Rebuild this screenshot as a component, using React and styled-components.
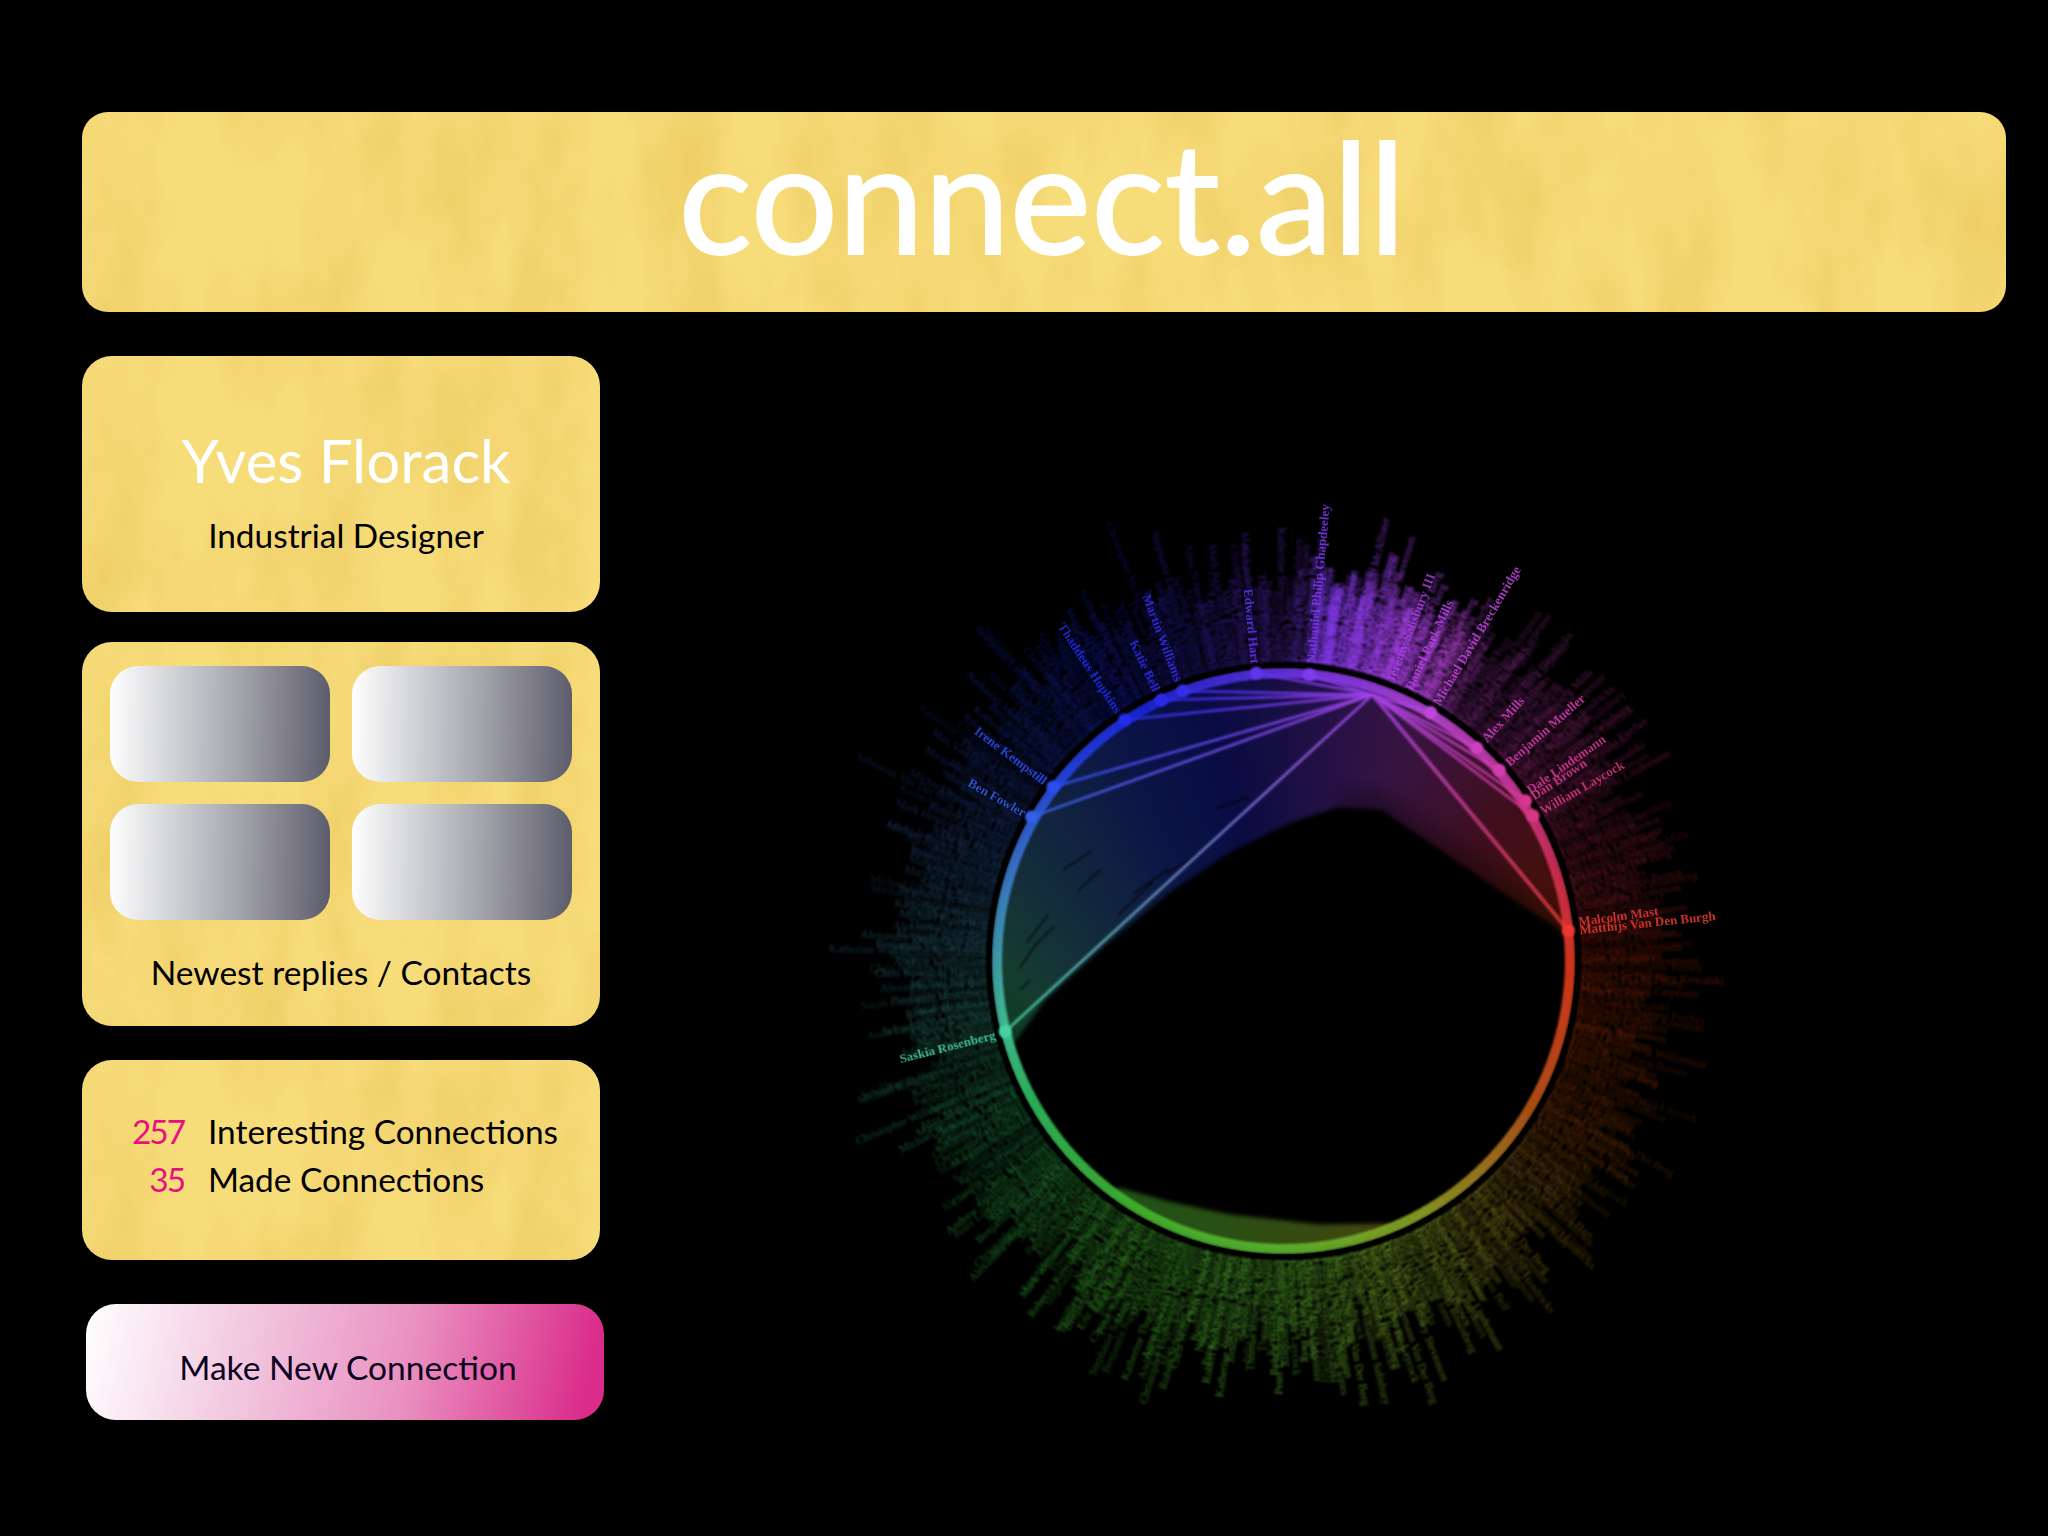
import React, { useMemo } from "react"
import styled, { createGlobalStyle, css } from "styled-components"

const paperSvg = `<svg xmlns='http://www.w3.org/2000/svg' width='2048' height='420'><filter id='p' x='0' y='0' width='100%' height='100%' color-interpolation-filters='sRGB'><feTurbulence type='fractalNoise' baseFrequency='.014 .006' numOctaves='6' seed='23'/><feColorMatrix values='0 0 0 0 .92  0 0 0 0 .79  0 0 0 0 .37  1.5 0 0 0 -.58'/></filter><rect width='100%' height='100%' filter='url(#p)'/></svg>`

const paper = css`
    background-color: #f7dc7a;
    background-image: url("data:image/svg+xml,${encodeURIComponent(paperSvg)}");
`

const GlobalStyle = createGlobalStyle`
    html, body {
        margin: 0;
        padding: 0;
        background: #000;
    }
`

const Page = styled.div`
    width: 2048px;
    height: 1536px;
    padding: 112px 0 0 82px;
    box-sizing: border-box;
    overflow: hidden;
    background: #000;
    font-family: Lato, "Open Sans", sans-serif;
    color: #000;
`

const Banner = styled.header`
    ${paper}
    width: 1924px;
    height: 200px;
    border-radius: 26px;
    display: flex;
    align-items: center;
    justify-content: center;
    padding-right: 4px;
    box-sizing: border-box;
`

const Title = styled.h1`
    margin: 0 0 34px;
    font-size: 154px;
    line-height: 1;
    font-weight: 400;
    color: #fff;
    -webkit-text-stroke: 2px #fff;
`

const Main = styled.div`
    display: flex;
    margin-top: 44px;
`

const Sidebar = styled.aside`
    width: 522px;
    display: flex;
    flex-direction: column;
`

const Card = styled.section`
    ${paper}
    width: 518px;
    border-radius: 30px;
    box-sizing: border-box;
`

const ProfileCard = styled(Card)`
    height: 256px;
    padding: 68px 0 0 10px;
    text-align: center;
`

const Name = styled.div`
    font-size: 60px;
    line-height: 72px;
    color: #fff;
`

const Role = styled.div`
    margin-top: 17px;
    font-size: 33.4px;
    line-height: 44px;
`

const RepliesCard = styled(Card)`
    height: 384px;
    margin-top: 30px;
    padding: 24px 28px 0;
`

const TileGrid = styled.div`
    display: grid;
    grid-template-columns: 220px 220px;
    grid-auto-rows: 116px;
    gap: 22px;
`

const Tile = styled.div`
    border-radius: 28px;
    background: linear-gradient(91deg, #fff 0%, #d9dadd 24%, #abacb3 54%, #7c7b87 82%, #5c5b6b 100%);
`

const Caption = styled.div`
    margin-top: 30px;
    font-size: 33.5px;
    line-height: 44px;
    text-align: center;
`

const StatsCard = styled(Card)`
    height: 200px;
    margin-top: 34px;
    padding: 47px 0 0 50px;
    display: grid;
    grid-template-columns: 52px auto;
    grid-auto-rows: 48px;
    column-gap: 24px;
    align-content: start;
    font-size: 33.4px;
    line-height: 48px;
`

const StatValue = styled.span`
    text-align: right;
    letter-spacing: -2px;
    color: #e6117f;
`

const ConnectButton = styled.button`
    width: 518px;
    height: 116px;
    margin: 44px 0 0 4px;
    padding: 10px 0 0 6px;
    border: 0;
    border-radius: 30px;
    background: linear-gradient(102deg, #fff 0%, #f2c9e0 30%, #e990c0 62%, #da2c8a 96%);
    font-family: inherit;
    font-size: 33.6px;
    color: #0c0220;
    cursor: pointer;
`

const ChartArea = styled.svg`
    display: block;
    flex: none;
    width: 1444px;
    height: 1180px;
`

const NameLabels = styled.g`
    font-family: "Liberation Serif", serif;
    font-size: 11.5px;
`

const NodeLabels = styled.g`
    font-family: "Liberation Serif", serif;
    font-size: 13px;
    font-weight: 700;
`

// wheel geometry, page pixels
const CX = 1283.5
const CY = 961
const RX = 286.5
const RY = 288

const pt = (deg, off = 0) => {
    const a = (deg * Math.PI) / 180
    return [CX + (RX + off) * Math.cos(a), CY + (RY + off) * Math.sin(a)]
}

// points were read off a 960x940 crop of the wheel
const z = (x, y) => [800 + x / 1.633, 480 + y / 1.668]

const angleOf = ([x, y]) => {
    const d = (Math.atan2((y - CY) / RY, (x - CX) / RX) * 180) / Math.PI
    return d < 0 ? d + 360 : d
}

const hueStops = [
    [0, 240, 60, 30],
    [30, 195, 90, 25],
    [60, 150, 170, 40],
    [90, 95, 190, 50],
    [120, 70, 190, 50],
    [150, 50, 200, 100],
    [165, 70, 210, 160],
    [180, 70, 170, 190],
    [200, 60, 120, 220],
    [220, 40, 70, 240],
    [240, 30, 40, 230],
    [260, 80, 50, 230],
    [280, 140, 60, 240],
    [300, 190, 70, 220],
    [320, 210, 60, 170],
    [340, 220, 50, 90],
    [360, 240, 60, 30],
]

const colorAt = (deg) => {
    const d = ((deg % 360) + 360) % 360
    const i = hueStops.findIndex((s, n) => d >= s[0] && d <= hueStops[n + 1][0])
    const a = hueStops[i]
    const b = hueStops[i + 1]
    const t = (d - a[0]) / (b[0] - a[0])
    const mix = (n) => Math.round(a[n] + (b[n] - a[n]) * t)
    return `rgb(${mix(1)},${mix(2)},${mix(3)})`
}

const alphaStops = [
    [0, 0.3], [30, 0.34], [60, 0.55], [90, 0.68], [120, 0.55], [150, 0.34], [180, 0.34],
    [210, 0.3], [240, 0.38], [272, 0.48], [276, 0.95], [298, 0.9], [305, 0.42], [340, 0.3], [360, 0.3],
]

const alphaAt = (deg) => {
    const i = alphaStops.findIndex((s, n) => deg >= s[0] && deg <= alphaStops[n + 1][0])
    const a = alphaStops[i]
    const b = alphaStops[i + 1]
    return a[1] + ((b[1] - a[1]) * (deg - a[0])) / (b[0] - a[0])
}

const firstNames = ["Michael", "Christopher", "Alexandra", "Jonathan", "Sebastian", "Katherine", "Stephanie", "Benjamin", "Nathaniel", "Margaret", "Daniel", "Andrew", "Rebecca", "Thomas", "Laura", "Peter", "Anna", "Mark", "Julia", "Chris", "Sarah", "Robert", "Max", "Eric"]
const lastNames = ["Rosenberg", "Williamson", "Kowalski", "Hendricks", "Van Der Berg", "Lindemann", "Thompson", "McAllister", "Fischer", "Salisbury", "Carpenter", "Bell", "Hart", "Mills", "Nguyen", "Schneider", "Brown", "Laycock", "Jones", "Stevenson"]

const rng = (seed) => () => {
    seed = (seed * 16807) % 2147483647
    return (seed - 1) / 2147483646
}

const labelTransform = (deg, off) => {
    const [x, y] = pt(deg, off)
    const flipped = deg > 90 && deg < 270
    return {
        transform: `translate(${x.toFixed(1)} ${y.toFixed(1)}) rotate(${(flipped ? deg + 180 : deg).toFixed(1)})`,
        textAnchor: flipped ? "end" : "start",
    }
}

const buildLabels = () => {
    const rand = rng(4242)
    const pick = (list) => list[Math.floor(rand() * list.length)]
    const out = []
    const count = 620
    for (let i = 0; i < count; i++) {
        const deg = ((i / count) * 360 + rand() * 0.5) % 360
        const long = rand() > (deg > 50 && deg < 130 ? 0.55 : 0.72)
        out.push({
            name: long ? `${pick(firstNames)} ${pick(lastNames)} ${pick(lastNames)}` : `${pick(firstNames)} ${pick(lastNames)}`,
            deg,
            alpha: alphaAt(deg) * (0.55 + rand() * 0.6),
        })
    }
    // the crowded purple stretch at the top
    for (let i = 0; i < 50; i++) {
        const deg = 275 + rand() * 24
        out.push({ name: `${pick(firstNames)} ${pick(lastNames)}`, deg, alpha: alphaAt(deg) * (0.6 + rand() * 0.4) })
    }
    return out
}

const upperHull = [
    z(345, 945), z(400, 868), z(500, 775), z(600, 690), z(700, 622), z(800, 572), z(880, 545),
    z(950, 550), z(1050, 620), z(1150, 690), z(1255, 760),
]

const lowerHull = [z(960, 1240), z(850, 1242), z(700, 1225), z(600, 1203), z(520, 1180)]

const along = (line, t) => {
    const lens = line.slice(1).map((p, i) => Math.hypot(p[0] - line[i][0], p[1] - line[i][1]))
    let left = lens.reduce((a, b) => a + b, 0) * t
    for (let i = 0; i < lens.length; i++) {
        if (left <= lens[i]) {
            const k = left / lens[i]
            return [line[i][0] + (line[i + 1][0] - line[i][0]) * k, line[i][1] + (line[i + 1][1] - line[i][1]) * k]
        }
        left -= lens[i]
    }
    return line[line.length - 1]
}

const clamp01 = (n) => Math.max(0, Math.min(1, n))

// the fill leans teal on the left and red on the right of the hub
const fillShift = (d) => d - 14 * clamp01((288 - d) / 40) + 14 * clamp01((d - 288) / 30)

const fan = (from, to, line) => {
    const out = []
    const step = 2
    for (let d = from; d < to; d += step) {
        const a = pt(d)
        const b = pt(d + step + 0.3)
        const c = along(line, Math.min(1, (d + step + 0.3 - from) / (to - from)))
        const e = along(line, (d - from) / (to - from))
        out.push({
            key: `${from}-${d}`,
            points: [a, b, c, e].map((p) => p.map((n) => n.toFixed(1)).join(",")).join(" "),
            fill: colorAt(fillShift(d)),
        })
    }
    return out
}

const hub = z(935, 358)

const nodes = [
    { at: z(1255, 752), label: "Matthijs Van Den Burgh", chord: true, width: 4 },
    { at: z(1255, 752), label: "Malcolm Mast", nudge: -1.6 },
    { at: z(1197, 560), label: "William Laycock", chord: true },
    { at: z(1185, 535), label: "Dan Brown", chord: true },
    { at: z(1185, 535), label: "Dale Lindemann", nudge: -1.4 },
    { at: z(1142, 484), label: "Benjamin Mueller", chord: true },
    { at: z(1105, 447), label: "Alex Mills", chord: true },
    { at: z(1030, 388), label: "Michael David Breckenridge", chord: true },
    { at: z(985, 368), label: "Daniel Park Mills" },
    { at: z(958, 350), label: "Jeremy Salisbury III" },
    { at: z(832, 325), label: "Nathaniel Philip Ghapdeeley", chord: true },
    { at: z(745, 322), label: "Edward Hart", chord: true },
    { at: z(625, 352), label: "Martin Williams", chord: true },
    { at: z(590, 367), label: "Katie Bell", chord: true },
    { at: z(530, 400), label: "Thaddeus Hopkins", chord: true },
    { at: z(413, 512), label: "Irene Kempstill", chord: true },
    { at: z(378, 562), label: "Ben Fowler", chord: true },
    { at: z(335, 920), label: "Saskia Rosenberg", chord: true },
]

const streaks = [
    [z(372, 770), z(405, 725)], [z(360, 812), z(385, 775)], [z(385, 775), z(415, 745)], [z(520, 725), z(575, 672)],
    [z(545, 690), z(600, 650)], [z(600, 655), z(650, 625)], [z(430, 650), z(475, 620)], [z(680, 548), z(730, 530)],
    [z(360, 850), z(375, 835)], [z(455, 685), z(490, 650)],
]

const ConnectionWheel = () => {
    const labels = useMemo(buildLabels, [])
    const upperFill = useMemo(() => fan(166, 360, upperHull), [])
    const lowerFill = useMemo(() => fan(68, 126, lowerHull), [])
    const chords = nodes.filter((n) => n.chord)
    const fadePath = "M" + upperHull.slice(6).map((p) => p.map((n) => n.toFixed(1)).join(" ")).join("L")

    const ring = []
    for (let d = 0; d < 360; d += 2) {
        const [x1, y1] = pt(d)
        const [x2, y2] = pt(d + 2.5)
        ring.push(<line key={d} x1={x1} y1={y1} x2={x2} y2={y2} stroke={colorAt(d)} />)
    }

    return (
        <ChartArea viewBox="604 356 1444 1180">
            <defs>
                <filter id="soft" x="-5%" y="-5%" width="110%" height="110%">
                    <feGaussianBlur stdDeviation="0.8" />
                </filter>
                <filter id="crisp" x="-5%" y="-5%" width="110%" height="110%">
                    <feGaussianBlur stdDeviation="0.6" />
                </filter>
                <filter id="ringBlur" x="-5%" y="-5%" width="110%" height="110%">
                    <feGaussianBlur stdDeviation="1.1" />
                </filter>
                <filter id="fillBlur" x="-5%" y="-5%" width="110%" height="110%">
                    <feGaussianBlur stdDeviation="2" />
                </filter>
                <filter id="hullBlur" x="-20%" y="-20%" width="140%" height="140%">
                    <feGaussianBlur stdDeviation="12" />
                </filter>
                {chords.map((n, i) => (
                    <linearGradient key={i} id={`chord-${i}`} gradientUnits="userSpaceOnUse" x1={n.at[0]} y1={n.at[1]} x2={hub[0]} y2={hub[1]}>
                        <stop offset="0" stopColor={colorAt(angleOf(n.at))} />
                        <stop offset="1" stopColor={colorAt(288)} />
                    </linearGradient>
                ))}
            </defs>

            <NameLabels filter="url(#soft)">
                {labels.map((l, i) => (
                    <text key={i} {...labelTransform(l.deg, 11)} dy="0.35em" fill={colorAt(l.deg)} fillOpacity={l.alpha}>
                        {l.name}
                    </text>
                ))}
            </NameLabels>

            <g filter="url(#fillBlur)" opacity="0.29">
                {upperFill.map((f) => (
                    <polygon key={f.key} points={f.points} fill={f.fill} />
                ))}
            </g>
            <g filter="url(#fillBlur)" opacity="0.42">
                {lowerFill.map((f) => (
                    <polygon key={f.key} points={f.points} fill={f.fill} />
                ))}
            </g>
            <path d={fadePath} fill="none" stroke="#000" strokeWidth="26" strokeOpacity="0.45" filter="url(#hullBlur)" />

            <g stroke="#000" strokeOpacity="0.6" strokeWidth="2" strokeLinecap="round" filter="url(#soft)">
                {streaks.map(([a, b], i) => (
                    <line key={i} x1={a[0]} y1={a[1]} x2={b[0]} y2={b[1]} />
                ))}
            </g>

            <g strokeOpacity="0.8" filter="url(#soft)">
                {chords.map((n, i) => (
                    <line key={i} x1={n.at[0]} y1={n.at[1]} x2={hub[0]} y2={hub[1] + 0.01} stroke={`url(#chord-${i})`} strokeWidth={n.width || 3} />
                ))}
            </g>

            <g strokeWidth="10" opacity="0.86" filter="url(#ringBlur)">{ring}</g>
            <ellipse cx={CX} cy={CY} rx={RX + 6.5} ry={RY + 6.5} fill="none" stroke="#000" strokeWidth="2" />

            <g filter="url(#soft)">
                {chords.map((n, i) => (
                    <circle key={i} cx={n.at[0]} cy={n.at[1]} r="6.5" fill={colorAt(angleOf(n.at))} />
                ))}
            </g>

            <NodeLabels filter="url(#crisp)">
                {nodes.map((n, i) => {
                    const deg = angleOf(n.at) + (n.nudge || 0)
                    return (
                        <text key={i} {...labelTransform((deg + 360) % 360, 11)} dy="0.35em" fill={colorAt(deg)} fillOpacity="0.85">
                            {n.label}
                        </text>
                    )
                })}
            </NodeLabels>
        </ChartArea>
    )
}

const App = () => (
    <Page>
        <GlobalStyle />
        <Banner>
            <Title>connect.all</Title>
        </Banner>
        <Main>
            <Sidebar>
                <ProfileCard>
                    <Name>Yves Florack</Name>
                    <Role>Industrial Designer</Role>
                </ProfileCard>
                <RepliesCard>
                    <TileGrid>
                        <Tile />
                        <Tile />
                        <Tile />
                        <Tile />
                    </TileGrid>
                    <Caption>Newest replies / Contacts</Caption>
                </RepliesCard>
                <StatsCard>
                    <StatValue>257</StatValue>
                    <span>Interesting Connections</span>
                    <StatValue>35</StatValue>
                    <span>Made Connections</span>
                </StatsCard>
                <ConnectButton>Make New Connection</ConnectButton>
            </Sidebar>
            <ConnectionWheel />
        </Main>
    </Page>
)

export default App
